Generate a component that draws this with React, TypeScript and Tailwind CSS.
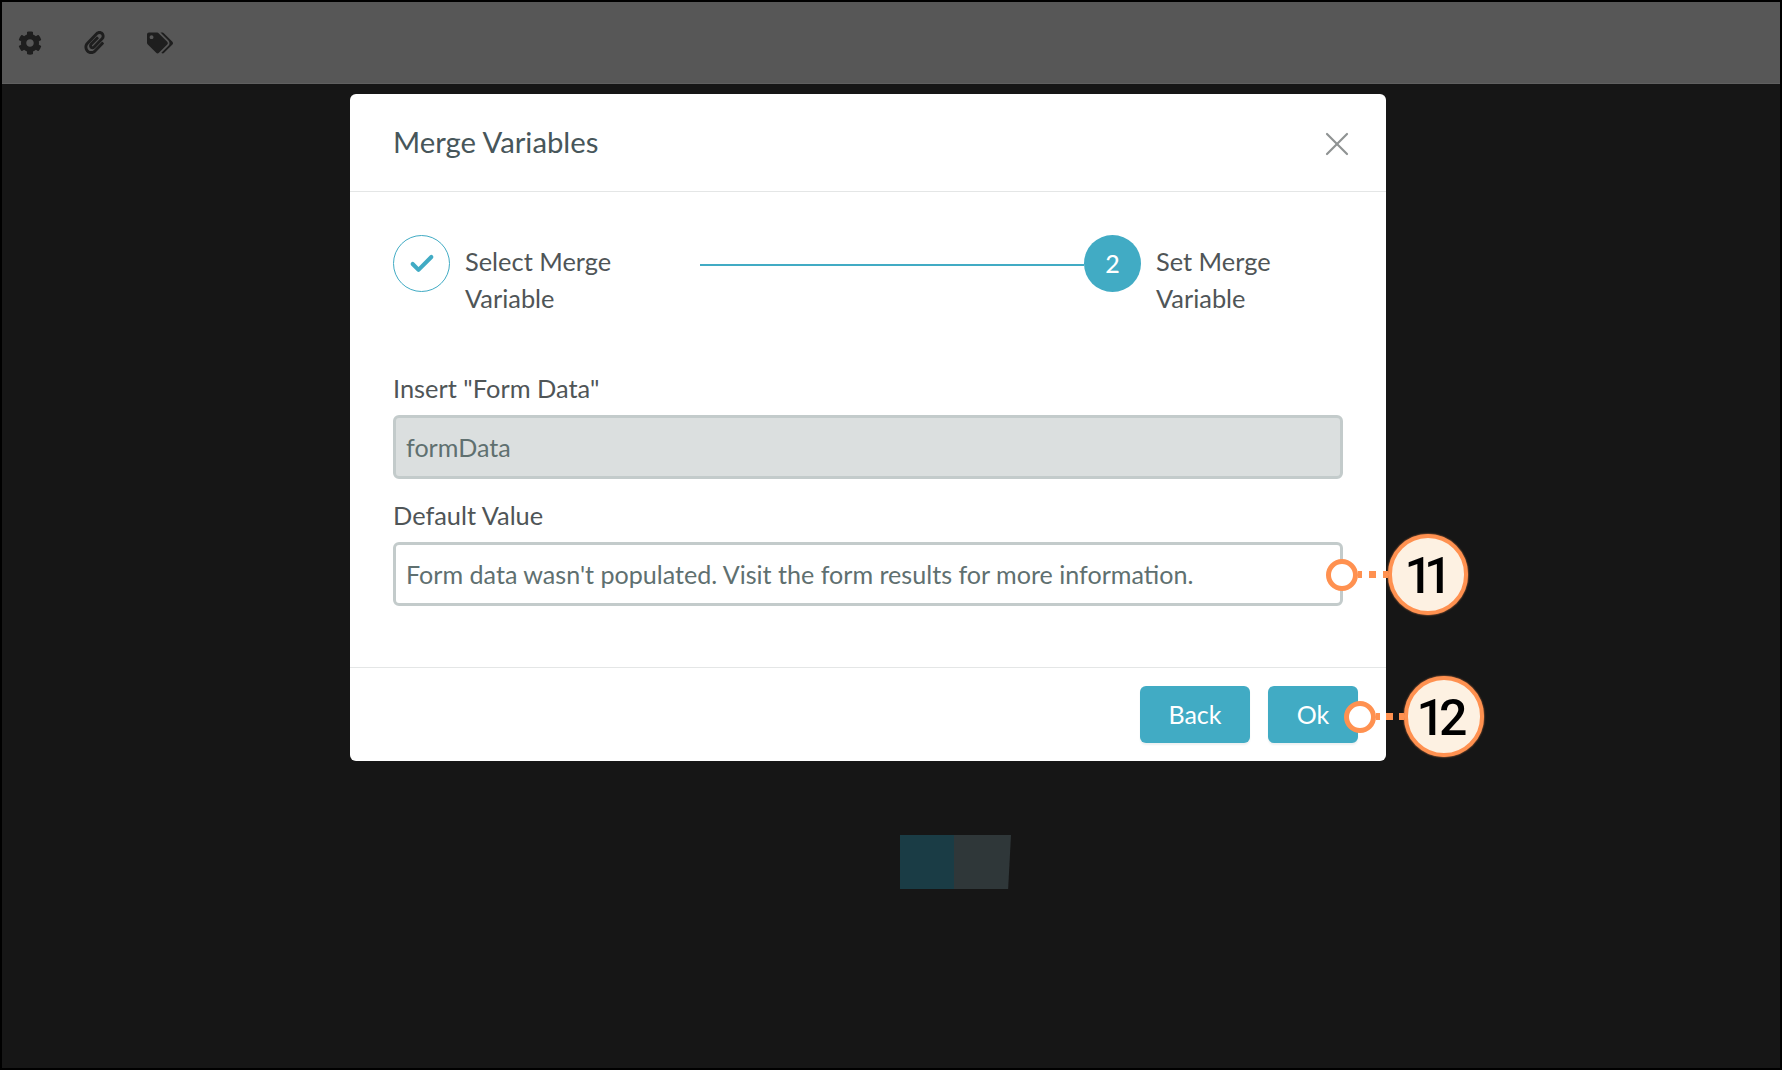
import { FaCog, FaPaperclip, FaTags } from "react-icons/fa";
import { Check, X } from "lucide-react";

const Callout = ({
  label,
  className,
  dotsClass,
  labelClass,
}: {
  label: string;
  className: string;
  dotsClass: string;
  labelClass: string;
}) => (
  <div className={`absolute flex items-center ${className}`}>
    <span className="z-10 h-[32px] w-[32px] shrink-0 rounded-full border-[5px] border-[#ff9150] bg-white" />
    <div className={`flex items-center ${dotsClass}`}>
      <span className="h-[7px] w-[4px] bg-[#ff9150]" />
      <span className="h-[7px] w-[7px] bg-[#ff9150]" />
      <span className="h-[7px] w-[5px] bg-[#ff9150]" />
    </div>
    <span
      className={`flex h-[81px] w-[80px] shrink-0 items-center justify-center rounded-full border-[4px] border-[#ff9150] bg-[#fdf1e2] pt-[2px] font-['Roboto',sans-serif] text-[50px] leading-none font-medium text-black shadow-[0_0_2px_#ff9150] ${labelClass}`}
    >
      {label}
    </span>
  </div>
);

const Field = ({
  label,
  value,
  disabled,
}: {
  label: string;
  value: string;
  disabled?: boolean;
}) => (
  <div>
    <div className="h-[37px] text-[25.4px] leading-[37px] text-[#4f5557]">{label}</div>
    <div
      className={`mt-[8px] flex h-[64px] items-center rounded-[6px] border-[3px] border-[#c3cbcb] px-[10px] pt-[1px] text-[25.1px] text-[#5f7070] ${
        disabled ? "bg-[#dbdfdf]" : "bg-white"
      }`}
    >
      {value}
    </div>
  </div>
);

const Step = ({ children, title }: { children: React.ReactNode; title: string[] }) => (
  <div className="flex items-start gap-[15px]">
    {children}
    <div className="pt-[8px] text-[25.4px] leading-[37px] text-[#4f5557]">
      {title.map((line) => (
        <div key={line}>{line}</div>
      ))}
    </div>
  </div>
);

export default function App() {
  return (
    <div className="relative flex h-screen flex-col overflow-hidden border-2 border-black bg-[#161616] font-['Lato',sans-serif]">
      <div className="flex h-[82px] shrink-0 items-center border-b border-[#606060] bg-[#575757] pl-[16px] text-[#1e1e1e]">
        <FaCog className="h-[24px] w-[24px]" />
        <FaPaperclip className="ml-[41px] h-[23px] w-[23px]" />
        <FaTags className="ml-[41px] h-[22px] w-[26px]" />
      </div>

      <div className="ml-[348px] mt-[10px] w-[1036px] rounded-[6px] bg-white">
        <div className="flex h-[98px] items-center justify-between border-b border-[#e4e6e6] pl-[43px] pr-[29px]">
          <h2 className="-mt-[2px] text-[29.3px] text-[#47565a]">Merge Variables</h2>
          <X className="mt-[2px] h-[40px] w-[40px] text-[#8f9393]" strokeWidth={1.3} />
        </div>

        <div className="px-[43px] pb-[61px] pt-[43px]">
          <div className="relative flex h-[98px] items-start justify-between">
            <Step title={["Select Merge", "Variable"]}>
              <span className="flex h-[57px] w-[57px] items-center justify-center rounded-full border border-[#41abc4]">
                <Check className="h-[28px] w-[28px] text-[#41abc4]" strokeWidth={3.5} />
              </span>
            </Step>
            <div className="ml-[89px] mt-[29px] h-[2px] flex-1 bg-[#41abc4]" />
            <div className="w-[259px]">
              <Step title={["Set Merge", "Variable"]}>
                <span className="flex h-[57px] w-[57px] shrink-0 items-center justify-center rounded-full bg-[#41abc4] text-[25px] font-medium text-white">
                  2
                </span>
              </Step>
            </div>
          </div>

          <div className="mt-[37px] flex flex-col gap-[18px]">
            <Field disabled label={'Insert "Form Data"'} value="formData" />
            <Field
              label="Default Value"
              value="Form data wasn't populated. Visit the form results for more information."
            />
          </div>
        </div>

        <div className="flex h-[94px] items-start justify-end gap-[18px] border-t border-[#e4e6e6] pr-[28px] pt-[18px]">
          <button className="h-[57px] w-[110px] rounded-[6px] bg-[#41abc4] pt-[1px] text-[25px] text-white shadow-[0_2px_2px_#eef1f2]">
            Back
          </button>
          <button className="h-[57px] w-[90px] rounded-[6px] bg-[#41abc4] pt-[1px] text-[25px] text-white shadow-[0_2px_2px_#eef1f2]">
            Ok
          </button>
        </div>
      </div>

      <div className="ml-[898px] mt-[74px] flex h-[54px] w-[111px]">
        <div className="w-[54px] bg-[#1a3c45]" />
        <div className="w-[57px] bg-[#2f3739] [clip-path:polygon(0_0,100%_0,95%_100%,0_100%)]" />
      </div>

      <Callout
        className="left-[1324px] top-[532px]"
        dotsClass="gap-[7px]"
        label="11"
        labelClass="pr-[8px] tracking-[-9px]"
      />
      <Callout
        className="left-[1342px] top-[674px]"
        dotsClass="gap-[6px]"
        label="12"
        labelClass="pr-[10px] tracking-[-6px]"
      />
    </div>
  );
}
